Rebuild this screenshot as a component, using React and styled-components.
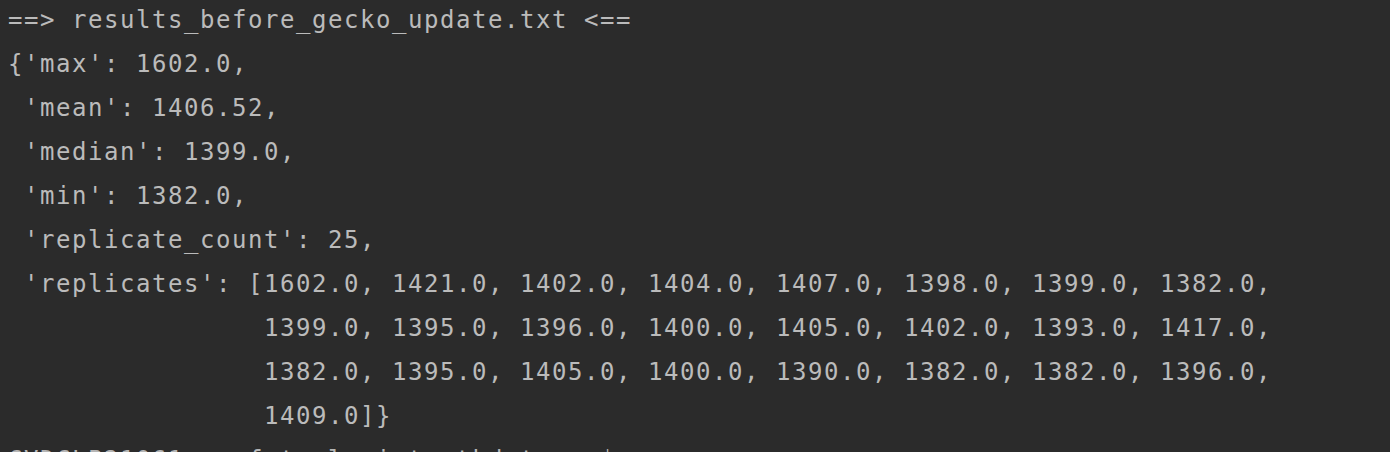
import React from "react";
import styled, { createGlobalStyle } from "styled-components";

const Global = createGlobalStyle`
  html, body {
    margin: 0;
    padding: 0;
    background: #2b2b2b;
    height: 452px;
    overflow: hidden;
  }
`;

const Terminal = styled.div`
  box-sizing: border-box;
  width: 1390px;
  height: 452px;
  overflow: hidden;
  background: #2b2b2b;
  color: #bbbbbb;
  padding: 0 8px;
  display: flex;
  flex-direction: column;
`;

const Output = styled.div`
  margin-top: -2px;
  display: flex;
  flex-direction: column;
`;

const Line = styled.div`
  font-family: "DejaVu Sans Mono", "Liberation Mono", monospace;
  font-size: 24px;
  letter-spacing: 1.55px;
  line-height: 44px;
  height: 44px;
  white-space: pre;
  color: ${(p) => (p.$dim ? "#b5b5b5" : "#bbbbbb")};
`;

const lines = [
  "==> results_before_gecko_update.txt <==",
  "{'max': 1602.0,",
  " 'mean': 1406.52,",
  " 'median': 1399.0,",
  " 'min': 1382.0,",
  " 'replicate_count': 25,",
  " 'replicates': [1602.0, 1421.0, 1402.0, 1404.0, 1407.0, 1398.0, 1399.0, 1382.0,",
  "                1399.0, 1395.0, 1396.0, 1400.0, 1405.0, 1402.0, 1393.0, 1417.0,",
  "                1382.0, 1395.0, 1405.0, 1400.0, 1390.0, 1382.0, 1382.0, 1396.0,",
  "                1409.0]}",
  "CVDCLP21061:~  fetaslasi_testkdata_  $",
];

export default function App() {
  return (
    <>
      <Global />
      <Terminal>
        <Output>
          {lines.map((l, i) => (
            <Line key={i} $dim={i === lines.length - 1}>
              {l}
            </Line>
          ))}
        </Output>
      </Terminal>
    </>
  );
}
